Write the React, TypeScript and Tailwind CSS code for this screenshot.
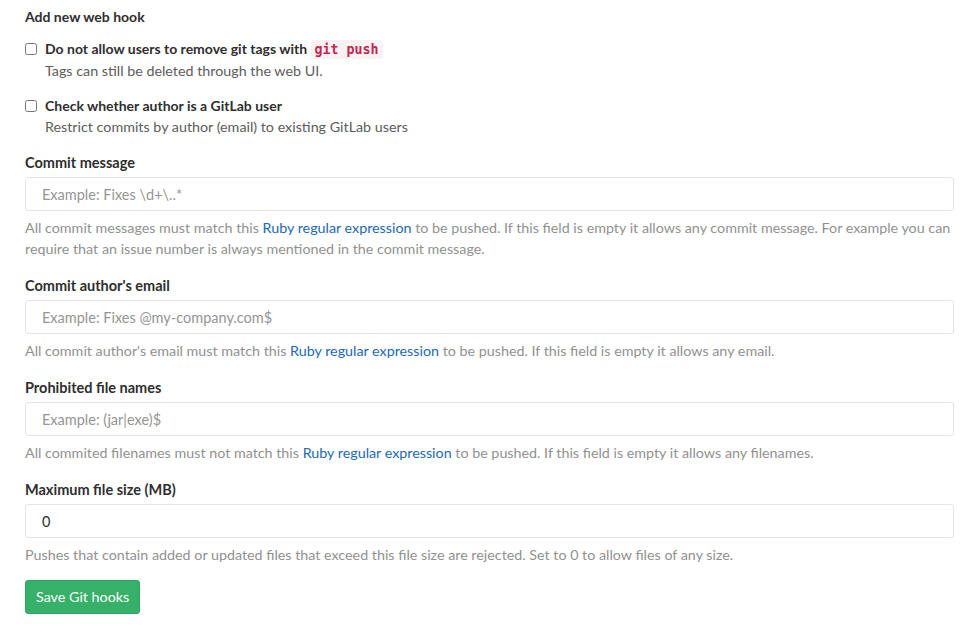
import React from 'react';

const font = { fontFamily: 'Lato, "Noto Sans", sans-serif' };

function Field({ label, placeholder, value, last, children }: { label: string; placeholder?: string; value?: string; last?: boolean; children: React.ReactNode }) {
  return (
    <div className={last ? 'mb-[15px]' : 'mb-[16px]'}>
      <label className="block pt-[1px] text-[14.5px] font-bold leading-[20px] text-[#2e2e2e] mb-[4px]">{label}</label>
      <input
        type="text"
        placeholder={placeholder}
        defaultValue={value}
        className="block w-full h-[34px] rounded-[3px] border border-[#e5e5e5] bg-white px-[16px] text-[14.5px] text-[#2e2e2e] placeholder:text-[#959595] outline-none"
      />
      <p className="mt-[6px] text-[14.3px] leading-[21px] text-[#919191]">{children}</p>
    </div>
  );
}

function Check({ title, help }: { title: React.ReactNode; help: string }) {
  return (
    <div className="flex gap-[8px] mb-[15px]">
      <input type="checkbox" className="mt-[4px] w-[12px] h-[12px] shrink-0 accent-[#555]" />
      <div>
        <div className="text-[14px] font-bold leading-[20px] text-[#2e2e2e]">{title}</div>
        <div className="text-[14.3px] leading-[20px] text-[#5c5c5c] mt-[1px]">{help}</div>
      </div>
    </div>
  );
}

const Link = () => <a className="text-[#1b69b6]">Ruby regular expression</a>;

export default function App() {
  return (
    <div className="bg-white min-h-[636px] pl-[25px] pr-[16px] pt-[7px]" style={font}>
      <h4 className="text-[14px] font-bold leading-[20px] text-[#2e2e2e] mb-[12px]">Add new web hook</h4>
      <div className="mb-[2px]">
        <Check
          title={
            <>
              Do not allow users to remove git tags with{' '}
              <code className="rounded-[3px] bg-[#f9f2f4] px-[4px] py-[2px] text-[13.3px] font-bold text-[#c7254e]" style={{ fontFamily: '"DejaVu Sans Mono", monospace' }}>
                git push
              </code>
            </>
          }
          help="Tags can still be deleted through the web UI."
        />
        <Check title="Check whether author is a GitLab user" help="Restrict commits by author (email) to existing GitLab users" />
      </div>
      <Field label="Commit message" placeholder="Example: Fixes \d+\..*">
        All commit messages must match this <Link /> to be pushed. If this field is empty it allows any commit message. For example you can require that an issue number is always mentioned in the commit message.
      </Field>
      <Field label="Commit author's email" placeholder="Example: Fixes @my-company.com$">
        All commit author's email must match this <Link /> to be pushed. If this field is empty it allows any email.
      </Field>
      <Field label="Prohibited file names" placeholder="Example: (jar|exe)$">
        All commited filenames must not match this <Link /> to be pushed. If this field is empty it allows any filenames.
      </Field>
      <Field label="Maximum file size (MB)" value="0" last>
        Pushes that contain added or updated files that exceed this file size are rejected. Set to 0 to allow files of any size.
      </Field>
      <button className="h-[34px] rounded-[3px] border border-[#2fa660] bg-[#37b06a] px-[10px] text-[14.3px] text-white">
        Save Git hooks
      </button>
    </div>
  );
}
